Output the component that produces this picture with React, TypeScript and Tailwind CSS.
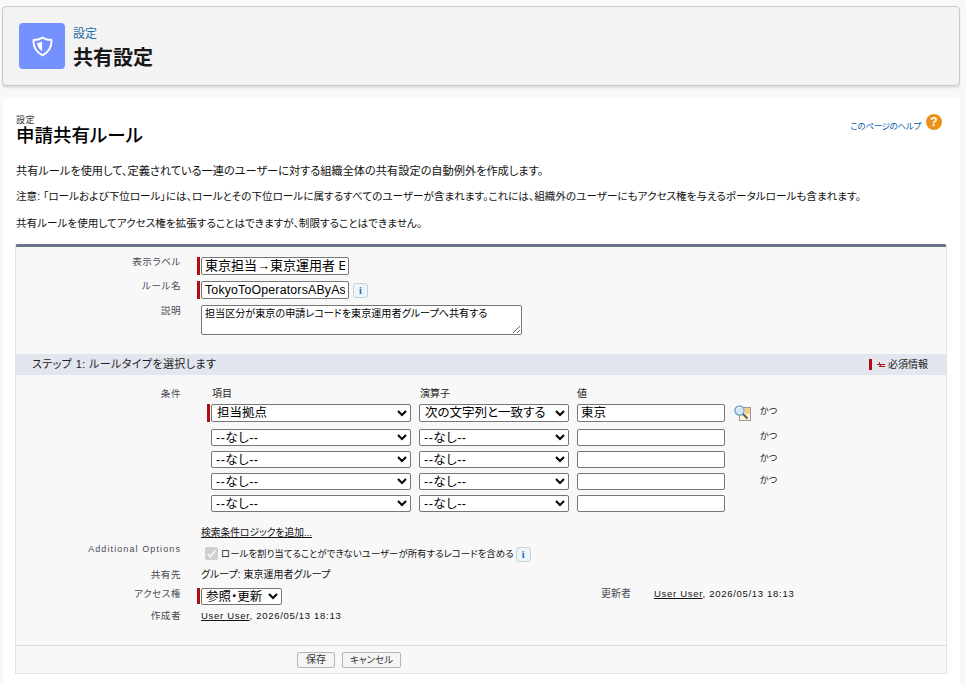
import React from 'react';

const FONT = "[font-family:'Liberation_Sans','Noto_Sans_CJK_JP',sans-serif] [font-feature-settings:'palt']";

const Required = () => <span className="w-[3px] h-[18px] bg-[#b00d12] mr-[1px] shrink-0" />;

const InfoButton = () => (
  <span className="w-[15px] h-[15px] rounded-[3px] border border-[#c4d2dc] bg-[#eef5fa] flex items-center justify-center text-[10px] font-bold leading-none text-[#1c6ea4] [font-family:'Liberation_Serif',serif]">
    i
  </span>
);

const Label = ({ children, className = '' }: { children: React.ReactNode; className?: string }) => (
  <div className={`w-[165px] shrink-0 text-right text-[9.6px] leading-[12px] text-[#4a4a56] tracking-[0.5px] ${className}`}>{children}</div>
);

const NONE = '--なし--';

const selectCls = 'h-[17px] rounded-[2px] border border-[#767676] bg-white leading-none text-black';
const inputCls = 'h-[17px] rounded-[2px] border border-[#767676] bg-white text-[11px] text-black px-[3px] outline-none';

const LookupIcon = () => (
  <svg width="17" height="16" viewBox="0 0 17 16">
    <rect x="5.5" y="2.5" width="11" height="13" fill="#fbf3d6" stroke="#9a9a9a" />
    <rect x="11" y="3" width="5" height="6" fill="#f4cf80" />
    <circle cx="5.5" cy="5.5" r="4.6" fill="#cfe6f7" stroke="#6a9cc0" strokeWidth="1.2" />
    <path d="M2.5 5a3 3 0 0 1 3-2.5" stroke="#fff" strokeWidth="1" fill="none" />
    <path d="M9 9l4.5 4.5" stroke="#5a5a5a" strokeWidth="2" />
  </svg>
);

const FilterRow = ({ field, op, value, required, last }: { field: string; op: string; value: string; required?: boolean; last?: boolean }) => (
  <div className="flex items-start h-[22px]">
    <div className="w-[180px] shrink-0" />
    <div className="flex items-center w-[15px] justify-end shrink-0">{required && <Required />}</div>
    <select defaultValue={field} className={`${selectCls} w-[200px] ${required ? 'h-[18px] text-[12.5px] pl-[1px]' : 'text-[12.5px] tracking-[0.5px]'}`}>
      <option>{field}</option>
    </select>
    <select defaultValue={op} className={`${selectCls} w-[150px] ml-[8px] ${required ? 'h-[18px] text-[12.5px] pl-[1px]' : 'text-[12.5px] tracking-[0.5px]'}`}>
      <option>{op}</option>
    </select>
    <input readOnly value={value} className={`${inputCls} w-[148px] ml-[8px] ${required ? 'h-[18px] text-[12.5px]' : ''}`} />
    <div className="w-[17px] ml-[9px] mt-[1px] shrink-0">{required && <LookupIcon />}</div>
    {!last && <span className="ml-[9px] mt-[1px] text-[9px] leading-[12px] text-[#222]">かつ</span>}
  </div>
);

export default function App() {
  return (
    <div className={`${FONT} w-[966px] h-[684px] overflow-hidden bg-[#f8f8f8] pt-[6px] pl-[2px] pr-[6px]`}>
      <div className="h-[80px] rounded-[4px] border border-[#c9c9c9] bg-[#f3f3f3] shadow-[0_2px_2px_rgba(0,0,0,0.1)] flex items-center pl-[16px]">
        <div className="w-[46px] h-[46px] rounded-[4px] bg-[#7590ff] flex items-center justify-center">
          <svg width="21" height="21" viewBox="0 0 20 20">
            <path d="M10 1.5C12.5 3 15.5 3.8 18.5 3.8 19 10 15.5 15.5 10 18.5 4.5 15.5 1 10 1.5 3.8 4.5 3.8 7.5 3 10 1.5z" fill="none" stroke="#fff" strokeWidth="1.8" strokeLinejoin="round" />
            <path d="M9.6 5.2C8 6 6.5 6.5 5 6.6 5 9.5 6.5 12.5 9.6 14.5z" fill="#fff" />
          </svg>
        </div>
        <div className="ml-[8px] mt-[6px]">
          <div className="text-[12px] leading-[14px] text-[#1b6fa8]">設定</div>
          <div className="text-[20px] leading-[28px] font-bold text-[#181818] mt-[3px]">共有設定</div>
        </div>
      </div>

      <div className="mt-[12px] ml-[1px] h-[600px] rounded-t-[4px] bg-white px-[13px] pt-[16px]">
        <div className="flex justify-between">
          <div className="pt-[2px]">
            <div className="text-[9px] leading-[9px] text-[#333] tracking-[0.4px]">設定</div>
            <div className="text-[18.5px] font-medium leading-[22px] text-black">申請共有ルール</div>
          </div>
          <div className="flex items-start pr-[5px]">
            <span className="text-[8.5px] tracking-[-0.3px] leading-[12px] mt-[6px] text-[#015ba7]">このページのヘルプ</span>
            <span className="ml-[5px] w-[16px] h-[16px] rounded-full bg-[#e8921a] text-white text-[12px] font-bold leading-[16px] text-center">?</span>
          </div>
        </div>

        <div className="text-[10.6px] leading-[14px] text-[#111] mt-[17px]">
          <p className="text-[11.2px]">共有ルールを使用して、定義されている一連のユーザーに対する組織全体の共有設定の自動例外を作成します。</p>
          <p className="mt-[11px]">注意: 「ロールおよび下位ロール」には、ロールとその下位ロールに属するすべてのユーザーが含まれます。これには、組織外のユーザーにもアクセス権を与えるポータルロールも含まれます。</p>
          <p className="mt-[13px]">共有ルールを使用してアクセス権を拡張することはできますが、制限することはできません。</p>
        </div>

        <div className="mt-[14px] -ml-[1px] w-[932px] border border-[#e0e3e5] border-t-[3px] border-t-[#6b7489] rounded-t-[3px] bg-[#f8f8f8]">
          <div className="pt-[10px]">
            <div className="flex items-start h-[24px]">
              <Label className="-mt-[1px]">表示ラベル</Label>
              <div className="ml-[16px] flex items-center w-[4px] justify-end"><Required /></div>
              <input readOnly value="東京担当→東京運用者 E" className={`${inputCls} h-[18px] w-[148px] text-[13px] px-[3px] [font-feature-settings:normal]`} />
            </div>
            <div className="flex items-start h-[24px]">
              <Label className="-mt-[1px]">ルール名</Label>
              <div className="ml-[16px] flex items-center w-[4px] justify-end"><Required /></div>
              <input readOnly value="TokyoToOperatorsAByAs" className={`${inputCls} h-[18px] w-[148px] text-[12.3px] tracking-[0.2px] px-[3px]`} />
              <span className="ml-[4px] mt-[2px]"><InfoButton /></span>
            </div>
            <div className="flex items-start h-[49px]">
              <Label>説明</Label>
              <textarea readOnly value="担当区分が東京の申請レコードを東京運用者グループへ共有する" className="ml-[20px] w-[321px] h-[30px] rounded-[2px] border border-[#767676] bg-white text-[10.1px] leading-[13px] text-black px-[3px] py-[1px] outline-none" />
            </div>
          </div>

          <div className="h-[21px] bg-[#e3e6ef] flex items-center justify-between pl-[16px] pr-[18px]">
            <span className="text-[11px] tracking-[0.4px] text-[#222]">ステップ 1: ルールタイプを選択します</span>
            <span className="flex items-center text-[10px] text-[#222]">
              <span className="w-[3px] h-[11px] bg-[#b00d12] mr-[5px]" />
              <svg width="8" height="7" viewBox="0 0 8 7" className="mr-[3px]">
                <path d="M0 3.5h8M2 5.5h6M2 1l1.5 4" stroke="#a80d12" strokeWidth="1" fill="none" />
              </svg>
              必須情報
            </span>
          </div>

          <div className="pt-[9px]">
            <div className="relative">
              <Label className="absolute top-0 left-0">条件</Label>
              <div className="flex text-[10px] leading-[12px] text-[#222] h-[14px] mt-[4px] mb-[2px]">
                <div className="ml-[196px] w-[208px]">項目</div>
                <div className="w-[157px]">演算子</div>
                <div>値</div>
              </div>
              <div className="h-[25px]">
                <FilterRow required field="担当拠点" op="次の文字列と一致する" value="東京" />
              </div>
              <FilterRow field={NONE} op={NONE} value="" />
              <FilterRow field={NONE} op={NONE} value="" />
              <FilterRow field={NONE} op={NONE} value="" />
              <FilterRow last field={NONE} op={NONE} value="" />
            </div>

            <div className="ml-[185px] mt-[9px] text-[9.75px] leading-[13px] text-[#111] underline">検索条件ロジックを追加...</div>

            <div className="flex items-start h-[24px] mt-[6px]">
              <Label className="-mt-[2px] text-[9px] tracking-[1.1px]">Additional Options</Label>
              <div className="ml-[24px] flex items-center">
                <span className="w-[13px] h-[13px] rounded-[2px] bg-[#cfcfcf] flex items-center justify-center">
                  <svg width="11" height="11" viewBox="0 0 10 10"><path d="M1.5 5.5L4 8L8.5 2" stroke="#f4f4f4" strokeWidth="1.6" fill="none" /></svg>
                </span>
                <span className="ml-[3px] text-[9.45px] leading-[12px] text-[#111]">ロールを割り当てることができないユーザーが所有するレコードを含める</span>
                <span className="ml-[2px] mt-[2px]"><InfoButton /></span>
              </div>
            </div>

            <div className="flex items-start h-[19px]">
              <Label>共有先</Label>
              <span className="ml-[20px] text-[10px] leading-[12px] text-[#111]">グループ: 東京運用者グループ</span>
            </div>

            <div className="flex items-start h-[22px]">
              <Label>アクセス権</Label>
              <div className="ml-[16px] flex items-center w-[4px] justify-end"><span className="w-[3px] h-[16px] bg-[#b00d12] mr-[1px] shrink-0" /></div>
              <select defaultValue="参照・更新" className={`${selectCls} h-[16px] w-[81px] text-[12.5px]`}>
                <option>参照・更新</option>
              </select>
              <div className="ml-[304px] w-[45px] text-right text-[10px] leading-[12px] text-[#4a4a56]">更新者</div>
              <div className="ml-[23px] text-[9.5px] leading-[12px] text-[#111] tracking-[0.7px]"><span className="underline">User User</span>, 2026/05/13 18:13</div>
            </div>

            <div className="flex items-start h-[35px]">
              <Label>作成者</Label>
              <div className="ml-[20px] text-[9.5px] leading-[12px] text-[#111] tracking-[0.7px]"><span className="underline">User User</span>, 2026/05/13 18:13</div>
            </div>
          </div>

          <div className="h-[28px] border-t border-[#dbdbdb] flex items-center pl-[281px] gap-[7px]">
            <button className="h-[16px] w-[38px] rounded-[2px] border border-[#b5b5b5] bg-[#f5f5f5] text-[10px] leading-none text-[#333]">保存</button>
            <button className="h-[16px] w-[59px] rounded-[2px] border border-[#b5b5b5] bg-[#f5f5f5] text-[9.5px] leading-none text-[#333]">キャンセル</button>
          </div>
        </div>
      </div>
    </div>
  );
}
